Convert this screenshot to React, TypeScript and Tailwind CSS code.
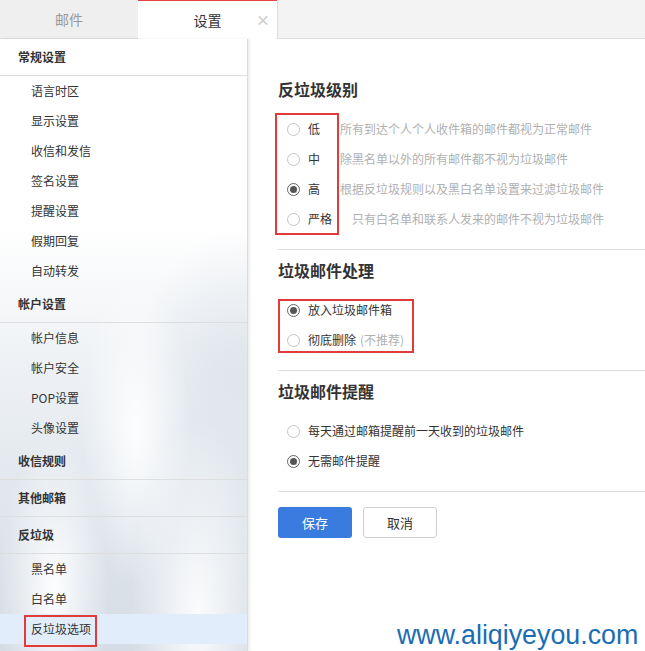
import React from "react";

type Item = { label: string; header?: boolean; active?: boolean };

const menu: Item[] = [
  { label: "常规设置", header: true },
  { label: "语言时区" },
  { label: "显示设置" },
  { label: "收信和发信" },
  { label: "签名设置" },
  { label: "提醒设置" },
  { label: "假期回复" },
  { label: "自动转发" },
  { label: "帐户设置", header: true },
  { label: "帐户信息" },
  { label: "帐户安全" },
  { label: "POP设置" },
  { label: "头像设置" },
  { label: "收信规则", header: true },
  { label: "其他邮箱", header: true },
  { label: "反垃圾", header: true },
  { label: "黑名单" },
  { label: "白名单" },
  { label: "反垃圾选项", active: true },
];

const levels = [
  { label: "低", desc: "所有到达个人个人收件箱的邮件都视为正常邮件" },
  { label: "中", desc: "除黑名单以外的所有邮件都不视为垃圾邮件" },
  { label: "高", desc: "根据反垃圾规则以及黑白名单设置来过滤垃圾邮件", checked: true },
  { label: "严格", desc: "只有白名单和联系人发来的邮件不视为垃圾邮件" },
];

const Radio = ({ checked }: { checked?: boolean }) =>
  checked ? (
    <span className="flex h-[13px] w-[13px] shrink-0 items-center justify-center rounded-full border border-[#666] bg-white">
      <span className="h-[7px] w-[7px] rounded-full bg-[#555]" />
    </span>
  ) : (
    <span className="h-[13px] w-[13px] shrink-0 rounded-full border border-[#c4c4c4] bg-white" />
  );

const Sidebar = () => (
  <aside className="relative w-[248px] shrink-0 border-r border-[#dcdcdc] shadow-[2px_0_3px_rgba(0,0,0,0.08)] bg-[radial-gradient(ellipse_at_22%_90%,rgba(255,255,255,0.95),rgba(255,255,255,0)_20%),radial-gradient(ellipse_at_80%_94%,rgba(255,255,255,0.9),rgba(255,255,255,0)_24%),radial-gradient(ellipse_at_55%_64%,rgba(255,255,255,0.9),rgba(255,255,255,0)_28%),radial-gradient(ellipse_at_95%_55%,rgba(220,226,233,0.8),rgba(220,226,233,0)_30%),linear-gradient(180deg,#ffffff_0%,#ffffff_30%,#eff2f5_52%,#e0e6ec_76%,#d5dce5_100%)]">
    {menu.map((m) =>
      m.header ? (
        <div
          key={m.label}
          className="flex h-[37px] items-center border-b border-[#dedede] pl-[18px] text-[12px] font-bold text-[#333]"
        >
          {m.label}
        </div>
      ) : (
        <div
          key={m.label}
          className={`relative flex h-[30px] items-center pl-[31px] text-[12px] text-[#333] ${
            m.active ? "bg-[#e2edfb]" : ""
          }`}
        >
          {m.label}
          {m.active && (
            <span className="absolute left-[24px] top-[1px] h-[32px] w-[73px] border-2 border-[#e23b3b]" />
          )}
        </div>
      )
    )}
  </aside>
);

const App = () => {
  return (
    <div className="relative h-[651px] w-[645px] overflow-hidden bg-white font-['Noto_Sans_CJK_SC','Noto_Sans',sans-serif] text-[#333]">
      {/* tabs */}
      <div className="flex h-[39px]">
        <div className="flex w-[138px] items-center justify-center border-b border-[#dedede] bg-[#efefef] text-[14px] text-[#999]">
          邮件
        </div>
        <div className="relative flex w-[139px] items-center justify-center border-t border-[#e04444] bg-white text-[14px] text-[#333]">
          设置
          <span className="absolute right-[7px] top-[11px] text-[14px] font-bold leading-none text-[#cccccc]">×</span>
        </div>
        <div className="flex-1 border-b border-l border-[#dedede] bg-[#f3f3f3]" />
      </div>

      <div className="flex h-[612px]">
        <Sidebar />

        <main className="flex-1 pl-[30px]">
          {/* 反垃圾级别 */}
          <section className="border-b border-[#dedede] pt-[38px] pb-[15px]">
            <h2 className="text-[16px] leading-[24px] font-bold text-[#333]">反垃圾级别</h2>
            <div className="relative mt-[13px]">
              {levels.map((l) => (
                <div key={l.label} className="flex h-[30px] items-center pl-[9px] text-[12px]">
                  <Radio checked={l.checked} />
                  <span className="ml-[8px] text-[#333]">{l.label}</span>
                  <span className="ml-[20px] text-[#b0b0b0]">{l.desc}</span>
                </div>
              ))}
              <span className="absolute left-[-3px] top-[-1px] h-[122px] w-[64px] border-2 border-[#e23b3b]" />
            </div>
          </section>

          {/* 垃圾邮件处理 */}
          <section className="border-b border-[#dedede] pt-[8px] pb-[15px]">
            <h2 className="text-[16px] leading-[24px] font-bold text-[#333]">垃圾邮件处理</h2>
            <div className="relative mt-[13px]">
              <div className="flex h-[30px] items-center pl-[9px] text-[12px]">
                <Radio checked />
                <span className="ml-[8px] text-[#333]">放入垃圾邮件箱</span>
              </div>
              <div className="flex h-[30px] items-center pl-[9px] text-[12px]">
                <Radio />
                <span className="ml-[8px] text-[#333]">彻底删除</span>
                <span className="ml-[4px] text-[#b0b0b0]">(不推荐)</span>
              </div>
              <span className="absolute left-0 top-[4px] h-[54px] w-[136px] border-2 border-[#e23b3b]" />
            </div>
          </section>

          {/* 垃圾邮件提醒 */}
          <section className="border-b border-[#dedede] pt-[8px] pb-[15px]">
            <h2 className="text-[16px] leading-[24px] font-bold text-[#333]">垃圾邮件提醒</h2>
            <div className="mt-[13px]">
              <div className="flex h-[30px] items-center pl-[9px] text-[12px]">
                <Radio />
                <span className="ml-[8px] text-[#333]">每天通过邮箱提醒前一天收到的垃圾邮件</span>
              </div>
              <div className="flex h-[30px] items-center pl-[9px] text-[12px]">
                <Radio checked />
                <span className="ml-[8px] text-[#333]">无需邮件提醒</span>
              </div>
            </div>
          </section>

          <div className="flex gap-[11px] pt-[15px]">
            <button className="h-[31px] w-[74px] rounded-[3px] bg-[#3a7be0] text-[13px] text-white">保存</button>
            <button className="h-[31px] w-[74px] rounded-[3px] border border-[#cfcfcf] bg-white text-[13px] text-[#333]">
              取消
            </button>
          </div>
        </main>
      </div>

      <div className="absolute left-[397px] top-[622px] font-['Liberation_Sans',Arial,sans-serif] text-[26.8px] leading-none text-[#1b6db3]">
        www.aliqiyeyou.com
      </div>
    </div>
  );
};

export default App;
